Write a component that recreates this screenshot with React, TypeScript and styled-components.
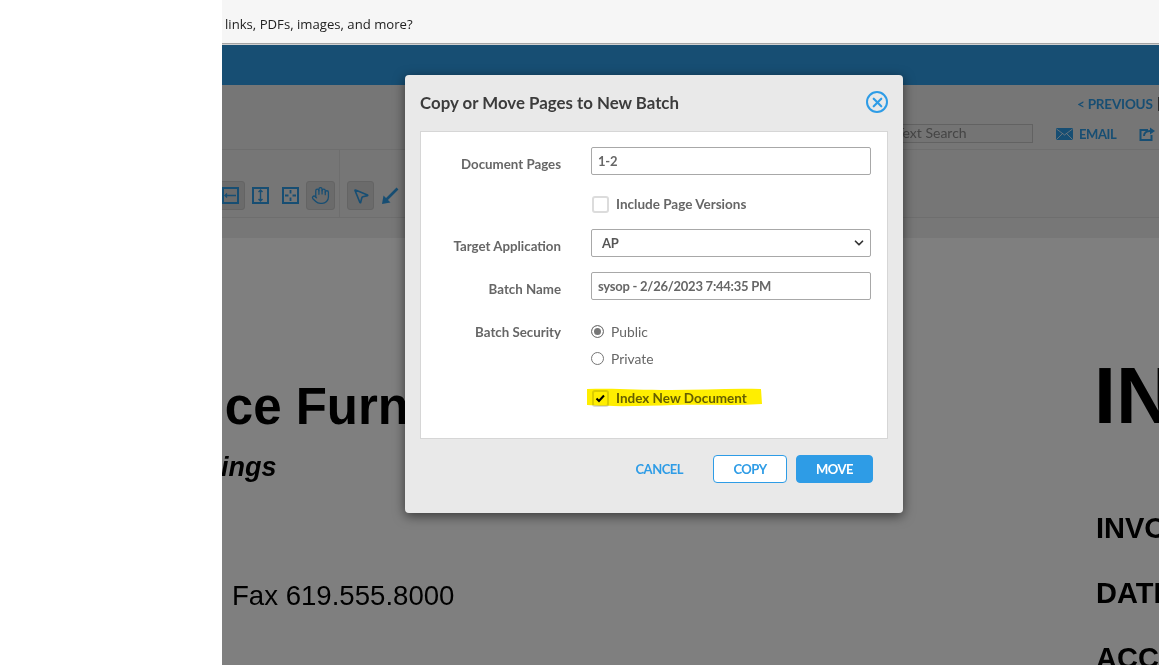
import React from 'react'
import styled, { createGlobalStyle } from 'styled-components'
import { ChevronDown, Hand, MousePointer2, X } from 'lucide-react'

const GlobalStyle = createGlobalStyle`
  html, body {
    margin: 0;
    height: 100%;
    overflow: hidden;
    background: #fff;
  }
`

const uiFont = `'Lato', 'Noto Sans', sans-serif`
const blue = '#2e9ce6'
const labelGrey = '#666'

const Page = styled.div`
  display: grid;
  grid-template-columns: 222px 1fr;
  width: 1159px;
  height: 665px;
  overflow: hidden;
  font-family: ${uiFont};
`

const WhitePanel = styled.div`
  background: #fff;
`

const Main = styled.div`
  display: flex;
  flex-direction: column;
  min-width: 0;
`

const PromptBar = styled.div`
  height: 44px;
  flex: none;
  box-sizing: border-box;
  padding: 16px 0 0 3px;
  background: #f6f6f6;
  border-bottom: 1px solid #a4a4a4;
  font: 13.15px/17px 'Open Sans', sans-serif;
  color: #222;
  box-shadow: 0 1px 0 #d0d0d0;
`

const Workspace = styled.div`
  position: relative;
  flex: 1;
  display: flex;
  flex-direction: column;
  margin-top: 1px;
  overflow: hidden;
`

const BlueBand = styled.div`
  height: 40px;
  flex: none;
  background: ${blue};
`

const TopTools = styled.div`
  height: 65px;
  flex: none;
  box-sizing: border-box;
  padding: 9px 0 0 668px;
  background: #ececec;
  border-bottom: 1px solid #ddd;
  overflow: hidden;
`

const PrevRow = styled.div`
  display: flex;
  padding-left: 187px;
  height: 20px;
  align-items: center;
`

const PrevLink = styled.a`
  font-size: 13.5px;
  font-weight: 700;
  letter-spacing: -0.2px;
  color: ${blue};
  white-space: nowrap;
`

const PrevDivider = styled.span`
  width: 1px;
  height: 14px;
  margin-left: 5px;
  background: #555;
`

const SearchRow = styled.div`
  display: flex;
  align-items: center;
  margin-top: 10px;
  white-space: nowrap;
`

const SearchBox = styled.div`
  width: 143px;
  height: 19px;
  flex: none;
  box-sizing: border-box;
  border: 1px solid #c4c4c4;
  background: #e8e8e8;
  padding-left: 5px;
  margin-right: 23px;
  font-size: 14px;
  line-height: 15px;
  color: #8a8a8a;
`

const ActionLink = styled.a`
  display: flex;
  align-items: center;
  gap: 6px;
  margin-right: 23px;
  font-size: 13px;
  font-weight: 700;
  letter-spacing: -0.4px;
  color: ${blue};
`

const IconTools = styled.div`
  height: 68px;
  flex: none;
  display: flex;
  box-sizing: border-box;
  margin-left: -14px;
  background: #ececec;
  border-bottom: 1px solid #dcdcdc;
`

const ToolGroup = styled.div<{ $width: number; $inset: number }>`
  width: ${(p) => p.$width}px;
  flex: none;
  box-sizing: border-box;
  display: flex;
  align-items: center;
  gap: 1px;
  padding: 24px 0 0 ${(p) => p.$inset}px;
  border-right: 1px solid #dcdcdc;
`

const ToolButton = styled.div<{ $active?: boolean; $size?: number }>`
  width: ${(p) => p.$size ?? 29}px;
  height: 29px;
  flex: none;
  display: flex;
  align-items: center;
  justify-content: center;
  box-sizing: border-box;
  border-radius: 3px;
  color: ${blue};
  ${(p) => p.$active && 'background: #d6d6d6; border: 1px solid #c8c8c8;'}
`

const ToolStrip = styled.div`
  height: 20px;
  flex: none;
  background: #eeeeee;
`

const Sheet = styled.div`
  position: relative;
  flex: 1;
  background: #fff;
  overflow: hidden;
  font-family: 'Liberation Sans', Arial, sans-serif;
  color: #000;
`

const SheetText = styled.div<{ $x: number; $y: number; $size: number; $bold?: boolean; $italic?: boolean }>`
  position: absolute;
  left: ${(p) => p.$x}px;
  top: ${(p) => p.$y}px;
  font-size: ${(p) => p.$size}px;
  line-height: 1;
  white-space: nowrap;
  font-weight: ${(p) => (p.$bold ? 700 : 400)};
  font-style: ${(p) => (p.$italic ? 'italic' : 'normal')};
`

const Backdrop = styled.div`
  position: absolute;
  inset: 0;
  background: rgba(0, 0, 0, 0.5);
`

const Modal = styled.div`
  position: absolute;
  left: 183px;
  top: 30px;
  width: 498px;
  height: 438px;
  box-sizing: border-box;
  padding: 0 15px;
  background: #e9e9e9;
  border-radius: 4px;
  box-shadow: 0 3px 12px rgba(0, 0, 0, 0.55);
`

const ModalHeader = styled.div`
  height: 56px;
  box-sizing: border-box;
  padding-bottom: 2px;
  display: flex;
  align-items: center;
  justify-content: space-between;
`

const ModalTitle = styled.h2`
  margin: 0;
  font-size: 16.85px;
  font-weight: 700;
  color: #3c3c3c;
`

const CloseButton = styled.div`
  width: 22px;
  height: 22px;
  flex: none;
  box-sizing: border-box;
  display: flex;
  align-items: center;
  justify-content: center;
  border: 2px solid ${blue};
  border-radius: 50%;
  color: ${blue};
`

const FormPanel = styled.div`
  position: relative;
  height: 308px;
  box-sizing: border-box;
  padding-top: 15px;
  background: #fff;
  border: 1px solid #d6d6d6;
`

const Row = styled.div<{ $height: number }>`
  display: grid;
  grid-template-columns: 140px 280px;
  column-gap: 30px;
  height: ${(p) => p.$height}px;
  align-items: center;
`

const Label = styled.label<{ $flush?: boolean }>`
  grid-column: 1;
  padding-top: ${(p) => (p.$flush ? 2 : 6)}px;
  text-align: right;
  font-size: 13.3px;
  font-weight: 700;
  color: ${labelGrey};
  white-space: nowrap;
`

const Field = styled.div`
  grid-column: 2;
  height: 28px;
  box-sizing: border-box;
  display: flex;
  align-items: center;
  justify-content: space-between;
  padding: 0 6px;
  border: 1px solid #a8a8a8;
  border-radius: 2px;
  font-size: 13px;
  font-weight: 700;
  letter-spacing: -0.25px;
  color: ${labelGrey};
  white-space: nowrap;
`

const SelectField = styled(Field)`
  padding: 0 4px 0 10px;
  color: #555;
`

const Option = styled.div`
  grid-column: 2;
  display: flex;
  align-items: center;
  font-size: 13.8px;
  color: ${labelGrey};
`

const CheckOption = styled(Option)`
  gap: 7px;
  padding-top: 4px;
  font-size: 13.5px;
  font-weight: 700;
`

const Checkbox = styled.span`
  width: 17px;
  height: 17px;
  margin-left: 1px;
  flex: none;
  box-sizing: border-box;
  display: flex;
  align-items: center;
  justify-content: center;
  border: 2px solid #dcdcdc;
  border-radius: 3px;
  background: #fff;
`

const Radio = styled.span<{ $on?: boolean }>`
  width: 13px;
  height: 13px;
  flex: none;
  box-sizing: border-box;
  margin-right: 7px;
  border: 1px solid #767676;
  border-radius: 50%;
  background: ${(p) => (p.$on ? '#777' : '#fff')};
  box-shadow: ${(p) => (p.$on ? 'inset 0 0 0 2px #fff' : 'none')};
`

const Highlight = styled.svg`
  position: absolute;
  left: 164px;
  top: 256px;
  mix-blend-mode: multiply;
  pointer-events: none;
`

const Footer = styled.div`
  display: flex;
  justify-content: flex-end;
  align-items: center;
  padding: 16px 15px 0 0;
`

const TextButton = styled.button`
  border: 0;
  padding: 0;
  margin-right: 30px;
  background: none;
  font: 700 13px ${uiFont};
  letter-spacing: -0.5px;
  color: ${blue};
`

const Button = styled.button<{ $primary?: boolean }>`
  height: 28px;
  width: ${(p) => (p.$primary ? 77 : 74)}px;
  margin-left: ${(p) => (p.$primary ? 9 : 0)}px;
  padding: 0;
  border: 1px solid ${blue};
  border-radius: 4px;
  background: ${(p) => (p.$primary ? blue : '#fff')};
  color: ${(p) => (p.$primary ? '#fff' : blue)};
  font: 700 13px ${uiFont};
  letter-spacing: -0.5px;
`

const FitWidthIcon = () => (
  <svg width="17" height="17" viewBox="0 0 17 17" fill="none" stroke="currentColor" strokeWidth="2">
    <rect x="1" y="1" width="15" height="15" />
    <path d="M3 8.500h11M5 6.500l-2 2 2 2" strokeWidth="1.400" />
  </svg>
)

const FitHeightIcon = () => (
  <svg width="17" height="17" viewBox="0 0 17 17" fill="none" stroke="currentColor" strokeWidth="2">
    <rect x="1" y="1" width="15" height="15" />
    <path d="M8.500 3v11M6.500 5l2-2 2 2M6.500 12l2 2 2-2" strokeWidth="1.400" />
  </svg>
)

const FitPageIcon = () => (
  <svg width="17" height="17" viewBox="0 0 17 17" fill="none" stroke="currentColor" strokeWidth="2">
    <rect x="1" y="1" width="15" height="15" />
    <path d="M8.500 3v3.500M8.500 10.500V14M3 8.500h3.500M10.500 8.500H14" strokeWidth="1.800" />
  </svg>
)

const LineIcon = () => (
  <svg width="18" height="18" viewBox="0 0 18 18" fill="none" stroke="currentColor">
    <path d="M16.500 1.500 5 13" strokeWidth="2.600" />
    <path d="M1 17l1.500-8.500 7 7z" fill="currentColor" stroke="none" />
  </svg>
)

const MailIcon = () => (
  <svg width="17" height="12" viewBox="0 0 17 12">
    <rect width="17" height="12" rx="1" fill="currentColor" />
    <path d="M.5 1 8.500 7l8-6M.5 11.500l6-6M16.500 11.500l-6-6" fill="none" stroke="#fff" strokeWidth="1" opacity=".75" />
  </svg>
)

const ShareIcon = () => (
  <svg width="17" height="15" viewBox="0 0 17 15" fill="none" stroke="currentColor" strokeWidth="2">
    <path d="M9 4H1.500v10h11V9" />
    <path d="M5 10c0-3 2.500-5 6-5" />
    <path d="M11 1.500 16 5l-5 3.500z" fill="currentColor" stroke="none" />
  </svg>
)

const App: React.FC = () => {
  return (
    <Page>
      <GlobalStyle />
      <WhitePanel />
      <Main>
        <PromptBar>links, PDFs, images, and more?</PromptBar>
        <Workspace>
          <BlueBand />
          <TopTools>
            <PrevRow>
              <PrevLink>&lt; PREVIOUS</PrevLink>
              <PrevDivider />
            </PrevRow>
            <SearchRow>
              <SearchBox>Text Search</SearchBox>
              <ActionLink>
                <MailIcon />
                EMAIL
              </ActionLink>
              <ActionLink>
                <ShareIcon />
              </ActionLink>
            </SearchRow>
          </TopTools>
          <IconTools>
            <ToolGroup $width={132} $inset={8}>
              <ToolButton $active><FitWidthIcon /></ToolButton>
              <ToolButton><FitHeightIcon /></ToolButton>
              <ToolButton><FitPageIcon /></ToolButton>
              <ToolButton $active><Hand size={19} strokeWidth={1.6} /></ToolButton>
            </ToolGroup>
            <ToolGroup $width={200} $inset={7}>
              <ToolButton $active $size={27}><MousePointer2 size={18} strokeWidth={2.2} /></ToolButton>
              <ToolButton><LineIcon /></ToolButton>
            </ToolGroup>
          </IconTools>
          <ToolStrip />
          <Sheet>
            <SheetText $x={-85} $y={143} $size={51} $bold>Office Furniture</SheetText>
            <SheetText $x={-163} $y={216} $size={27} $bold $italic>Fine Furnishings</SheetText>
            <SheetText $x={10} $y={344} $size={27.6}>Fax 619.555.8000</SheetText>
            <SheetText $x={872} $y={118} $size={79} $bold>INVOICE</SheetText>
            <SheetText $x={874} $y={276} $size={29} $bold>INVOICE #</SheetText>
            <SheetText $x={874} $y={341} $size={29} $bold>DATE</SheetText>
            <SheetText $x={874} $y={406} $size={29} $bold>ACCT</SheetText>
          </Sheet>
          <Backdrop />
          <Modal>
            <ModalHeader>
              <ModalTitle>Copy or Move Pages to New Batch</ModalTitle>
              <CloseButton><X size={15} strokeWidth={3.5} /></CloseButton>
            </ModalHeader>
            <FormPanel>
              <Row $height={28}>
                <Label>Document Pages</Label>
                <Field>1-2</Field>
              </Row>
              <Row $height={54}>
                <CheckOption><Checkbox />Include Page Versions</CheckOption>
              </Row>
              <Row $height={28}>
                <Label>Target Application</Label>
                <SelectField>AP<ChevronDown size={14} strokeWidth={3} color="#333" /></SelectField>
              </Row>
              <Row $height={15} />
              <Row $height={28}>
                <Label>Batch Name</Label>
                <Field>sysop - 2/26/2023 7:44:35 PM</Field>
              </Row>
              <Row $height={17} />
              <Row $height={28}>
                <Label $flush>Batch Security</Label>
                <Option><Radio $on />Public</Option>
              </Row>
              <Row $height={26}>
                <Option><Radio />Private</Option>
              </Row>
              <Row $height={50}>
                <CheckOption>
                  <Checkbox>
                    <svg width="11" height="9" viewBox="0 0 11 9" fill="none" stroke="#000" strokeWidth="2">
                      <path d="M1.500 4.500 4 7l5-5.500" />
                    </svg>
                  </Checkbox>
                  Index New Document
                </CheckOption>
              </Row>
              <Highlight width="178" height="19" viewBox="0 0 178 19">
                <path d="M2 1c30-1 50 1 84 1 30 0 60-2 90-1l1 15c-30 2-60 0-88 1-30 1-60 2-87 0z" fill="#ffee00" />
              </Highlight>
            </FormPanel>
            <Footer>
              <TextButton>CANCEL</TextButton>
              <Button>COPY</Button>
              <Button $primary>MOVE</Button>
            </Footer>
          </Modal>
        </Workspace>
      </Main>
    </Page>
  )
}

export default App
